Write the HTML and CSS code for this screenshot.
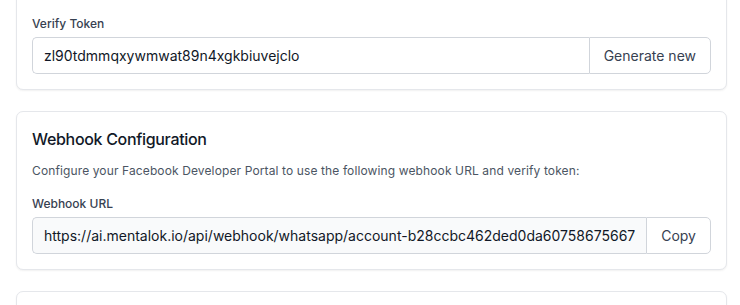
FILE: index.html
```html
<!DOCTYPE html>
<html lang="en">

<head>
    <meta charset="utf-8">
    <meta name="viewport" content="width=device-width, initial-scale=1.0">
    <title>WhatsApp account</title>
    <link rel="stylesheet" href="styles.css">
</head>

<body>

    <main class="indstillinger">

        <section class="kort kort-top">
            <label class="felt-label" for="token">Verify Token</label>
            <div class="felt-gruppe">
                <input id="token" class="felt" type="text" value="zl90tdmmqxywmwat89n4xgkbiuvejclo">
                <button class="felt-knap">Generate new</button>
            </div>
        </section>

        <section class="kort">
            <h2>Webhook Configuration</h2>
            <p class="beskrivelse">Configure your Facebook Developer Portal to use the following webhook URL and verify token:</p>
            <label class="felt-label" for="url">Webhook URL</label>
            <div class="felt-gruppe">
                <input id="url" class="felt laast" type="text" readonly value="https://ai.mentalok.io/api/webhook/whatsapp/account-b28ccbc462ded0da6075867566798f21">
                <button class="felt-knap">Copy</button>
            </div>
        </section>

        <section class="kort kort-naeste"></section>

    </main>

</body>

</html>
```

FILE: styles.css
```css
html,
body {
    margin: 0;
    background: #fff;
    font-family: Inter, "Noto Sans", sans-serif;
    color: #111827;
}

.indstillinger {
    display: flex;
    flex-direction: column;
    gap: 21px;
    padding: 0 13px 0 16px;
    margin-top: -40px;
}

.kort {
    background: #fff;
    border: 1px solid #e5e7eb;
    border-radius: 7px;
    box-shadow: 0 1px 2px rgba(0, 0, 0, .06);
    padding: 15px;
}

.kort-top {
    padding-top: 55px;
}

.kort-naeste {
    height: 80px;
}

h2 {
    margin: 0 0 12px;
    font-size: 16px;
    line-height: 24px;
    font-weight: 500;
    letter-spacing: -0.02em;
    color: #111827;
}

.beskrivelse {
    margin: 0 0 17px;
    font-size: 12px;
    line-height: 16px;
    letter-spacing: 0.12px;
    color: #4b5563;
}

.felt-label {
    display: block;
    margin-bottom: 5px;
    font-size: 12px;
    line-height: 16px;
    font-weight: 500;
    color: #374151;
}

.felt-gruppe {
    display: flex;
}

.felt {
    flex: 1;
    min-width: 0;
    height: 37px;
    box-sizing: border-box;
    padding: 0 11px;
    border: 1px solid #d1d5db;
    border-right: none;
    border-radius: 5px 0 0 5px;
    font-family: inherit;
    font-size: 14px;
    color: #111827;
    background: #fff;
    outline: none;
}

.felt.laast {
    background: #f9fafb;
}

.felt-knap {
    height: 37px;
    padding: 0 14px;
    border: 1px solid #d1d5db;
    border-radius: 0 5px 5px 0;
    background: #fff;
    font-family: inherit;
    font-size: 14px;
    color: #374151;
    cursor: pointer;
}
```
